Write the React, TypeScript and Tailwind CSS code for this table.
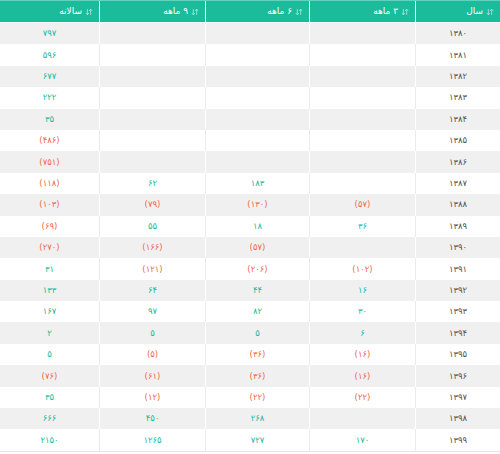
import { ArrowDownUp } from 'lucide-react'

type Cell = string

const rows: Cell[][] = [
  ['۱۳۸۰', '', '', '', '۷۹۷'],
  ['۱۳۸۱', '', '', '', '۵۹۶'],
  ['۱۳۸۲', '', '', '', '۶۷۷'],
  ['۱۳۸۳', '', '', '', '۲۲۲'],
  ['۱۳۸۴', '', '', '', '۳۵'],
  ['۱۳۸۵', '', '', '', '(۴۸۶)'],
  ['۱۳۸۶', '', '', '', '(۷۵۱)'],
  ['۱۳۸۷', '', '۱۸۳', '۶۲', '(۱۱۸)'],
  ['۱۳۸۸', '(۵۷)', '(۱۳۰)', '(۷۹)', '(۱۰۳)'],
  ['۱۳۸۹', '۳۶', '۱۸', '۵۵', '(۶۹)'],
  ['۱۳۹۰', '', '(۵۷)', '(۱۶۶)', '(۲۷۰)'],
  ['۱۳۹۱', '(۱۰۲)', '(۲۰۶)', '(۱۲۱)', '۳۱'],
  ['۱۳۹۲', '۱۶', '۴۴', '۶۴', '۱۳۳'],
  ['۱۳۹۳', '۳۰', '۸۲', '۹۷', '۱۶۷'],
  ['۱۳۹۴', '۶', '۵', '۵', '۲'],
  ['۱۳۹۵', '(۱۶)', '(۳۶)', '(۵)', '۵'],
  ['۱۳۹۶', '(۱۶)', '(۳۶)', '(۶۱)', '(۷۶)'],
  ['۱۳۹۷', '(۲۲)', '(۲۲)', '(۱۲)', '۳۵'],
  ['۱۳۹۸', '', '۲۶۸', '۴۵۰', '۶۶۶'],
  ['۱۳۹۹', '۱۷۰', '۷۲۷', '۱۲۶۵', '۲۱۵۰'],
]

const headers = ['سال', '۳ ماهه', '۶ ماهه', '۹ ماهه', 'سالانه']

const cols = 'grid grid-cols-[85px_106px_104px_106px_99px]'

export default function App() {
  return (
    <div
      dir="rtl"
      className="w-[500px] h-[454px] bg-white overflow-hidden"
      style={{ fontFamily: '"DejaVu Sans", sans-serif' }}
    >
      <div className={`${cols} h-[23px] bg-[#1abc9c] border-t border-[#5fd3bc] border-b border-b-white`}>
        {headers.map((h, i) => (
          <div
            key={i}
            className={`flex items-center gap-[3px] pr-[6px] text-white text-[9px] ${i < 4 ? 'border-l border-white' : ''}`}
          >
            <ArrowDownUp size={8} strokeWidth={2} className="opacity-80" />
            <span>{h}</span>
          </div>
        ))}
      </div>

      {rows.map((r, ri) => {
        const grey = ri % 2 === 0
        return (
          <div
            key={ri}
            className={`${cols} h-[21.4px] ${grey ? 'bg-[#f0f0f0]' : 'bg-white'}`}
          >
            {r.map((c, ci) => {
              const neg = c.startsWith('(')
              const color = ci === 0 ? 'text-[#555555]' : neg ? 'text-[#f2684c]' : 'text-[#1abc9c]'
              return (
                <div
                  key={ci}
                  className={`flex items-center justify-center text-[8.5px] ${color} ${ci < 4 ? (grey ? 'border-l border-white' : 'border-l border-[#ebebeb]') : ''}`}
                >
                  {c}
                </div>
              )
            })}
          </div>
        )
      })}
      <div className="h-px bg-[#e6e6e6]" />
    </div>
  )
}
